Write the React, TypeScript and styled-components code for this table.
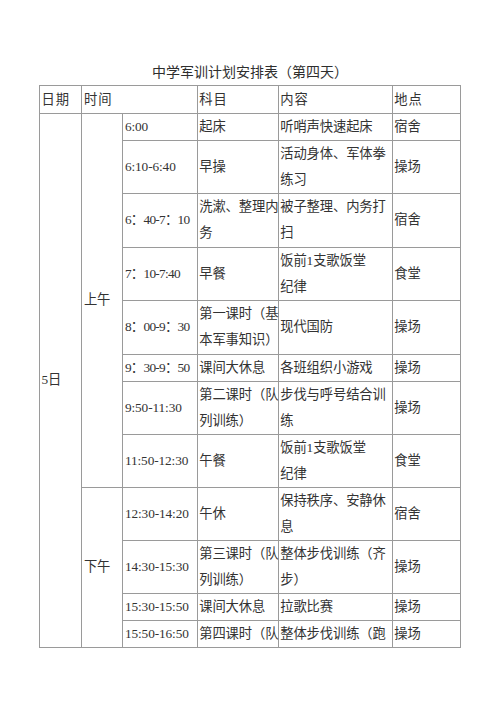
import React from "react";
import styled, { createGlobalStyle } from "styled-components";

const GlobalStyle = createGlobalStyle`
  html, body {
    margin: 0;
    padding: 0;
    background: #ffffff;
  }
  body {
    font-family: "Liberation Serif", "Noto Sans CJK SC", serif;
    color: #333333;
  }
`;

const Page = styled.div`
  width: 500px;
  padding-top: 63px;
  box-sizing: border-box;
`;

const Title = styled.h1`
  margin: 0 0 2px;
  height: 20px;
  line-height: 20px;
  font-size: 14px;
  font-weight: 400;
  text-align: center;
  color: #2e2e2e;
`;

const Sheet = styled.table`
  width: 421px;
  margin: 0 auto;
  border-collapse: collapse;
  table-layout: fixed;
  font-size: 13.3px;
`;

const Row = styled.tr<{ $h: number }>`
  height: ${({ $h }) => $h}px;
`;

const Cell = styled.td<{ $tight?: boolean }>`
  border: 1px solid #9a9a9a;
  padding: 0 0 0 1.5px;
  vertical-align: middle;
  text-align: left;
  white-space: nowrap;
  line-height: 26px;
  letter-spacing: ${({ $tight }) => ($tight ? "-0.7px" : "-0.1px")};
`;

const HeadCell = styled(Cell).attrs({ as: "th" })`
  font-weight: 400;
  letter-spacing: 1px;
`;

const Line = styled.span`
  display: block;
`;

type Item = {
  time: string;
  subject: string[];
  content: string[];
  place: string;
  h: number;
};

const morning: Item[] = [
  { time: "6:00", subject: ["起床"], content: ["听哨声快速起床"], place: "宿舍", h: 26.5 },
  { time: "6:10-6:40", subject: ["早操"], content: ["活动身体、军体拳", "练习"], place: "操场", h: 52.5 },
  { time: "6：40-7：10", subject: ["洗漱、整理内", "务"], content: ["被子整理、内务打", "扫"], place: "宿舍", h: 53.7 },
  { time: "7：10-7:40", subject: ["早餐"], content: ["饭前1支歌饭堂", "纪律"], place: "食堂", h: 52.3 },
  { time: "8：00-9：30", subject: ["第一课时（基", "本军事知识）"], content: ["现代国防"], place: "操场", h: 54 },
  { time: "9：30-9：50", subject: ["课间大休息"], content: ["各班组织小游戏"], place: "操场", h: 26 },
  { time: "9:50-11:30", subject: ["第二课时（队", "列训练）"], content: ["步伐与呼号结合训", "练"], place: "操场", h: 53 },
  { time: "11:50-12:30", subject: ["午餐"], content: ["饭前1支歌饭堂", "纪律"], place: "食堂", h: 53 },
];

const afternoon: Item[] = [
  { time: "12:30-14:20", subject: ["午休"], content: ["保持秩序、安静休", "息"], place: "宿舍", h: 53 },
  { time: "14:30-15:30", subject: ["第三课时（队", "列训练）"], content: ["整体步伐训练（齐", "步）"], place: "操场", h: 53 },
  { time: "15:30-15:50", subject: ["课间大休息"], content: ["拉歌比赛"], place: "操场", h: 27 },
  { time: "15:50-16:50", subject: ["第四课时（队"], content: ["整体步伐训练（跑"], place: "操场", h: 27 },
];

const Lines = ({ lines }: { lines: string[] }) => (
  <>
    {lines.map((l, i) => (
      <Line key={i}>{l}</Line>
    ))}
  </>
);

function App() {
  const total = morning.length + afternoon.length;

  const renderRow = (item: Item, lead: React.ReactNode) => (
    <Row $h={item.h} key={item.time}>
      {lead}
      <Cell $tight={item.time.includes("：")}>{item.time}</Cell>
      <Cell>
        <Lines lines={item.subject} />
      </Cell>
      <Cell>
        <Lines lines={item.content} />
      </Cell>
      <Cell>{item.place}</Cell>
    </Row>
  );

  return (
    <Page>
      <GlobalStyle />
      <Title>中学军训计划安排表（第四天）</Title>
      <Sheet>
        <colgroup>
          <col style={{ width: 42.4 }} />
          <col style={{ width: 41 }} />
          <col style={{ width: 74.3 }} />
          <col style={{ width: 81 }} />
          <col style={{ width: 114 }} />
          <col style={{ width: 68.3 }} />
        </colgroup>
        <thead>
          <Row $h={28}>
            <HeadCell>日期</HeadCell>
            <HeadCell colSpan={2}>时间</HeadCell>
            <HeadCell>科目</HeadCell>
            <HeadCell>内容</HeadCell>
            <HeadCell>地点</HeadCell>
          </Row>
        </thead>
        <tbody>
          {morning.map((item, i) =>
            renderRow(
              item,
              i === 0 ? (
                <>
                  <Cell rowSpan={total}>5日</Cell>
                  <Cell rowSpan={morning.length}>上午</Cell>
                </>
              ) : null
            )
          )}
          {afternoon.map((item, i) =>
            renderRow(item, i === 0 ? <Cell rowSpan={afternoon.length}>下午</Cell> : null)
          )}
        </tbody>
      </Sheet>
    </Page>
  );
}

export default App;
